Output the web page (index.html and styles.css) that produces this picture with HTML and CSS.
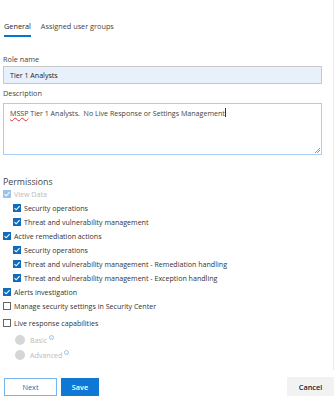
FILE: index.html
```html
<!DOCTYPE html>
<html lang="en">
<head>
  <meta charset="UTF-8">
  <title>Role</title>
  <link rel="stylesheet" href="styles.css">
</head>
<body>
  <div class="panel">
    <div class="tabs">
      <span class="tab active">General</span>
      <span class="tab">Assigned user groups</span>
    </div>

    <label class="field-label">Role name</label>
    <div class="input">Tier 1 Analysts</div>

    <label class="field-label">Description</label>
    <div class="textarea"><span class="typo">MSSP</span> Tier 1 Analysts.&nbsp; No Live Response or Settings Management<span class="caret"></span></div>

    <h2 class="section">Permissions</h2>
    <ul class="perms">
      <li class="disabled"><span class="cb on"></span>View Data</li>
      <li class="sub"><span class="cb on"></span>Security operations</li>
      <li class="sub"><span class="cb on"></span>Threat and vulnerability management</li>
      <li><span class="cb on"></span>Active remediation actions</li>
      <li class="sub"><span class="cb on"></span>Security operations</li>
      <li class="sub"><span class="cb on"></span>Threat and vulnerability management - Remediation handling</li>
      <li class="sub"><span class="cb on"></span>Threat and vulnerability management - Exception handling</li>
      <li><span class="cb on"></span>Alerts investigation</li>
      <li class="tight"><span class="cb"></span>Manage security settings in Security Center</li>
      <li class="gap"><span class="cb"></span>Live response capabilities</li>
      <li class="radio first"><span class="rb"></span>Basic <span class="info">i</span></li>
      <li class="radio"><span class="rb"></span>Advanced <span class="info">i</span></li>
    </ul>
  </div>

  <div class="footer">
    <button class="btn">Next</button>
    <button class="btn primary">Save</button>
    <button class="btn cancel">Cancel</button>
  </div>
</body>
</html>
```
FILE: styles.css
```css
* {
  box-sizing: border-box;
  margin: 0;
  padding: 0;
}

body {
  width: 334px;
  height: 400px;
  overflow: hidden;
  background: #fff;
  font-family: 'Open Sans', sans-serif;
  font-size: 7.1px;
  color: #333;
}

.panel {
  padding: 19px 11px 0 3px;
  border-right: 1px solid #ebebeb;
  height: 370px;
}

.tabs {
  display: flex;
  gap: 10px;
  padding-left: 1px;
  margin-bottom: 17px;
}

.tab {
  font-size: 7.3px;
  color: #444;
  padding: 2px 0 4px;
}

.tab.active {
  color: #222;
  border-bottom: 2px solid #0078d4;
}

.field-label {
  display: block;
  font-size: 7.3px;
  color: #444;
  margin-bottom: 2px;
}

.input {
  height: 18px;
  background: #e8f0fb;
  border: 1px solid #c8c8c8;
  padding: 2px 6px;
  color: #222;
  margin-bottom: 4px;
  line-height: 12px;
}

.textarea {
  height: 52px;
  border: 1px solid #a6cff2;
  padding: 4px 6px;
  color: #444;
  margin-top: 5px;
  position: relative;
}

.textarea::after {
  content: '';
  position: absolute;
  right: 1px;
  bottom: 1px;
  width: 5px;
  height: 5px;
  background: linear-gradient(135deg, transparent 45%, #999 45%, #999 55%, transparent 55%, transparent 70%, #999 70%, #999 80%, transparent 80%);
}

.typo {
  text-decoration: underline wavy #e03030;
  text-decoration-thickness: 0.5px;
}

.caret {
  display: inline-block;
  width: 1px;
  height: 9px;
  background: #333;
  vertical-align: -1px;
}

.section {
  font-size: 8.8px;
  font-weight: 400;
  color: #444;
  margin-top: 21px;
  margin-bottom: -1px;
}

.perms {
  list-style: none;
}

.perms li {
  display: flex;
  align-items: center;
  height: 14px;
  color: #333;
}

.perms li.sub {
  padding-left: 10px;
}

.perms li.tight {
  height: 13px;
}

.perms li.gap {
  margin-top: 4px;
}

.perms li.radio {
  padding-left: 12px;
  height: 15px;
  color: #bbb;
}

.perms li.radio.first {
  margin-top: 2px;
}

.perms li.disabled {
  color: #bbb;
}

.cb {
  width: 8px;
  height: 8px;
  border: 1px solid #666;
  margin-right: 3px;
  flex-shrink: 0;
  background: #fff;
}

.cb.on {
  border: none;
  background: #0f6cbd url("data:image/svg+xml,%3Csvg xmlns='http://www.w3.org/2000/svg' viewBox='0 0 8 8'%3E%3Cpath d='M1.5 4.2 L3.2 5.8 L6.6 2.2' fill='none' stroke='white' stroke-width='1.1'/%3E%3C/svg%3E") center/8px 8px no-repeat;
}

.disabled .cb.on {
  background-color: #9ec3ea;
}

.rb {
  width: 10px;
  height: 10px;
  border-radius: 50%;
  background: #d6d6d6;
  margin-right: 5px;
}

.info {
  display: inline-flex;
  align-items: center;
  justify-content: center;
  width: 5px;
  height: 5px;
  border: 0.6px solid #9ec3ea;
  border-radius: 50%;
  color: #9ec3ea;
  font-size: 4px;
  margin-left: 2px;
  margin-top: -4px;
}

.footer {
  display: flex;
  align-items: center;
  gap: 4px;
  padding: 7px 0 0 4px;
}

.btn {
  font-family: 'Open Sans', sans-serif;
  font-size: 7.3px;
  height: 18px;
  border: 1px solid #79b4ea;
  background: #fff;
  color: #0f6cbd;
  width: 53px;
}

.btn.primary {
  background: #0f78d4;
  border-color: #0f78d4;
  color: #fff;
  width: 38px;
  font-weight: 600;
}

.btn.cancel {
  margin-left: auto;
  width: 47px;
  height: 19px;
  background: #f2f2f2;
  border: none;
  color: #222;
  font-weight: 600;
}
```
